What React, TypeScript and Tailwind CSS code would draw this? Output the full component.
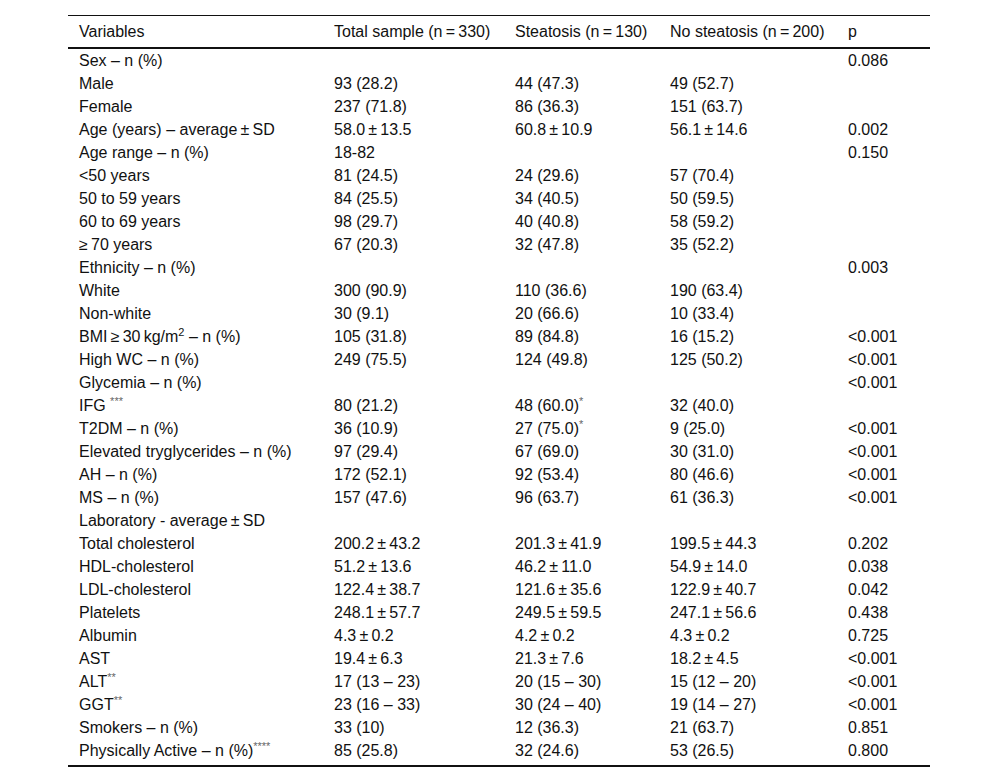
const T = '\u2009';
const pm = (a: string, b: string) => `${a}${T}±${T}${b}`;

type Row = { label: React.ReactNode; total?: string; st?: React.ReactNode; no?: string; p?: string };

function Sup({ children }: { children: React.ReactNode }) {
  return <sup className="text-[11px] text-[#666]">{children}</sup>;
}

const rows: Row[] = [
  { label: 'Sex – n (%)', p: '0.086' },
  { label: 'Male', total: '93 (28.2)', st: '44 (47.3)', no: '49 (52.7)' },
  { label: 'Female', total: '237 (71.8)', st: '86 (36.3)', no: '151 (63.7)' },
  { label: `Age (years) – average${T}±${T}SD`, total: pm('58.0', '13.5'), st: pm('60.8', '10.9'), no: pm('56.1', '14.6'), p: '0.002' },
  { label: 'Age range – n (%)', total: '18-82', p: '0.150' },
  { label: '<50 years', total: '81 (24.5)', st: '24 (29.6)', no: '57 (70.4)' },
  { label: '50 to 59 years', total: '84 (25.5)', st: '34 (40.5)', no: '50 (59.5)' },
  { label: '60 to 69 years', total: '98 (29.7)', st: '40 (40.8)', no: '58 (59.2)' },
  { label: `≥${T}70 years`, total: '67 (20.3)', st: '32 (47.8)', no: '35 (52.2)' },
  { label: 'Ethnicity – n (%)', p: '0.003' },
  { label: 'White', total: '300 (90.9)', st: '110 (36.6)', no: '190 (63.4)' },
  { label: 'Non-white', total: '30 (9.1)', st: '20 (66.6)', no: '10 (33.4)' },
  {
    label: (
      <>
        BMI{T}≥{T}30{T}kg/m<sup className="text-[11px]">2</sup> – n (%)
      </>
    ),
    total: '105 (31.8)',
    st: '89 (84.8)',
    no: '16 (15.2)',
    p: '<0.001',
  },
  { label: 'High WC – n (%)', total: '249 (75.5)', st: '124 (49.8)', no: '125 (50.2)', p: '<0.001' },
  { label: 'Glycemia – n (%)', p: '<0.001' },
  {
    label: (
      <>
        IFG <Sup>***</Sup>
      </>
    ),
    total: '80 (21.2)',
    st: (
      <>
        48 (60.0)<Sup>*</Sup>
      </>
    ),
    no: '32 (40.0)',
  },
  {
    label: 'T2DM – n (%)',
    total: '36 (10.9)',
    st: (
      <>
        27 (75.0)<Sup>*</Sup>
      </>
    ),
    no: '9 (25.0)',
    p: '<0.001',
  },
  { label: 'Elevated tryglycerides – n (%)', total: '97 (29.4)', st: '67 (69.0)', no: '30 (31.0)', p: '<0.001' },
  { label: 'AH – n (%)', total: '172 (52.1)', st: '92 (53.4)', no: '80 (46.6)', p: '<0.001' },
  { label: 'MS – n (%)', total: '157 (47.6)', st: '96 (63.7)', no: '61 (36.3)', p: '<0.001' },
  { label: `Laboratory - average${T}±${T}SD` },
  { label: 'Total cholesterol', total: pm('200.2', '43.2'), st: pm('201.3', '41.9'), no: pm('199.5', '44.3'), p: '0.202' },
  { label: 'HDL-cholesterol', total: pm('51.2', '13.6'), st: pm('46.2', '11.0'), no: pm('54.9', '14.0'), p: '0.038' },
  { label: 'LDL-cholesterol', total: pm('122.4', '38.7'), st: pm('121.6', '35.6'), no: pm('122.9', '40.7'), p: '0.042' },
  { label: 'Platelets', total: pm('248.1', '57.7'), st: pm('249.5', '59.5'), no: pm('247.1', '56.6'), p: '0.438' },
  { label: 'Albumin', total: pm('4.3', '0.2'), st: pm('4.2', '0.2'), no: pm('4.3', '0.2'), p: '0.725' },
  { label: 'AST', total: pm('19.4', '6.3'), st: pm('21.3', '7.6'), no: pm('18.2', '4.5'), p: '<0.001' },
  {
    label: (
      <>
        ALT<Sup>**</Sup>
      </>
    ),
    total: '17 (13 – 23)',
    st: '20 (15 – 30)',
    no: '15 (12 – 20)',
    p: '<0.001',
  },
  {
    label: (
      <>
        GGT<Sup>**</Sup>
      </>
    ),
    total: '23 (16 – 33)',
    st: '30 (24 – 40)',
    no: '19 (14 – 27)',
    p: '<0.001',
  },
  { label: 'Smokers – n (%)', total: '33 (10)', st: '12 (36.3)', no: '21 (63.7)', p: '0.851' },
  {
    label: (
      <>
        Physically Active – n (%)<Sup>****</Sup>
      </>
    ),
    total: '85 (25.8)',
    st: '32 (24.6)',
    no: '53 (26.5)',
    p: '0.800',
  },
];

export default function App() {
  const last = rows.length - 1;
  return (
    <div className="min-h-[783px] w-[1000px] bg-white pt-[15px] font-['Liberation_Sans',Arial,sans-serif] text-[16px] leading-[23px] text-[#111]">
      <table className="ml-[68px] w-[862px] table-fixed border-collapse">
        <colgroup>
          <col className="w-[256px]" />
          <col className="w-[181px]" />
          <col className="w-[155px]" />
          <col className="w-[178px]" />
          <col className="w-[92px]" />
        </colgroup>
        <thead>
          <tr className="h-[32px] border-t border-b-2 border-[#111]">
            <th className="pl-[11px] text-left font-normal">Variables</th>
            <th className="pl-[10px] text-left font-normal">Total sample (n{T}={T}330)</th>
            <th className="pl-[10px] text-left font-normal">Steatosis (n{T}={T}130)</th>
            <th className="pl-[10px] text-left font-normal">No steatosis (n{T}={T}200)</th>
            <th className="pl-[10px] text-left font-normal">p</th>
          </tr>
        </thead>
        <tbody className="border-b-2 border-[#111]">
          {rows.map((r, i) => {
            const pad = i === last ? 'pt-0 pb-[3px]' : 'p-0';
            return (
              <tr key={i} className="h-[23px]">
                <td className={`whitespace-nowrap pl-[11px] ${pad}`}>{r.label}</td>
                <td className={`whitespace-nowrap pl-[10px] ${pad}`}>{r.total}</td>
                <td className={`whitespace-nowrap pl-[10px] ${pad}`}>{r.st}</td>
                <td className={`whitespace-nowrap pl-[10px] ${pad}`}>{r.no}</td>
                <td className={`whitespace-nowrap pl-[10px] ${pad}`}>{r.p}</td>
              </tr>
            );
          })}
        </tbody>
      </table>
    </div>
  );
}
